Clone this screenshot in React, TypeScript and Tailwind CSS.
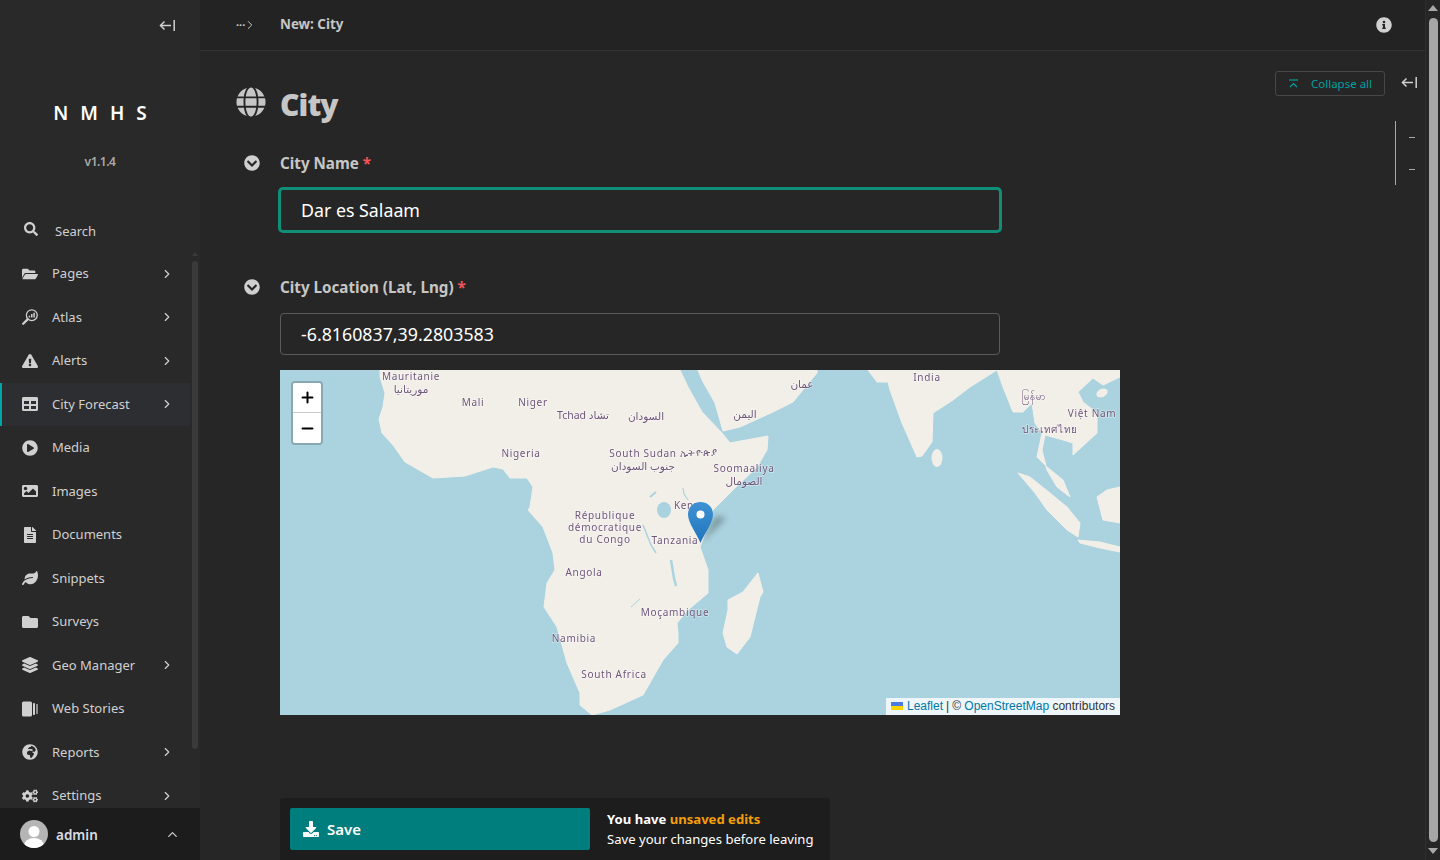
import { ChevronRight, ChevronUp, Minus, Plus } from 'lucide-react';
import {
  FaChevronCircleDown,
  FaCogs,
  FaDownload,
  FaExclamationTriangle,
  FaFileAlt,
  FaFolder,
  FaFolderOpen,
  FaGlobe,
  FaGlobeAfrica,
  FaImage,
  FaInfoCircle,
  FaLayerGroup,
  FaLeaf,
  FaPlayCircle,
  FaSearch,
  FaTable,
} from 'react-icons/fa';
import type { ComponentType, ReactNode } from 'react';

function StoriesIcon({ size = 16 }: { size?: number }) {
  return (
    <svg width={size} height={size} viewBox="0 0 16 16" fill="currentColor">
      <rect x="0" y="0.5" width="10" height="15" rx="1.5" />
      <rect x="11" y="2" width="2" height="12" rx="0.8" />
      <rect x="14.4" y="3" width="1.2" height="10" rx="0.6" />
    </svg>
  );
}

function AtlasIcon({ size = 16 }: { size?: number }) {
  return (
    <svg width={size} height={size} viewBox="0 0 16 16" fill="none" stroke="currentColor">
      <circle cx="9.800" cy="6.200" r="5.400" strokeWidth="1.300" />
      <path d="M5.600 10.400 L1.200 14.800" strokeWidth="2.200" strokeLinecap="round" />
      <path d="M7.500 6.800 V8.500 M9.800 5 V8.500 M12.100 3.800 V8.500" strokeWidth="1.500" />
    </svg>
  );
}

function CollapseArrow({ size = 17 }: { size?: number }) {
  return (
    <svg width={size} height={size} viewBox="0 0 17 17" fill="none" stroke="currentColor" strokeWidth="1.500">
      <path d="M1.500 8.500 H12" />
      <path d="M5.500 4.500 L1.500 8.500 L5.500 12.500" />
      <path d="M15.200 3 V14" />
    </svg>
  );
}

type NavItem = { label: string; icon: ComponentType<{ size?: number }>; arrow?: boolean; active?: boolean };

const NAV: NavItem[] = [
  { label: 'Pages', icon: FaFolderOpen, arrow: true },
  { label: 'Atlas', icon: AtlasIcon, arrow: true },
  { label: 'Alerts', icon: FaExclamationTriangle, arrow: true },
  { label: 'City Forecast', icon: FaTable, arrow: true, active: true },
  { label: 'Media', icon: FaPlayCircle },
  { label: 'Images', icon: FaImage },
  { label: 'Documents', icon: FaFileAlt },
  { label: 'Snippets', icon: FaLeaf },
  { label: 'Surveys', icon: FaFolder },
  { label: 'Geo Manager', icon: FaLayerGroup, arrow: true },
  { label: 'Web Stories', icon: StoriesIcon },
  { label: 'Reports', icon: FaGlobeAfrica, arrow: true },
  { label: 'Settings', icon: FaCogs, arrow: true },
];

function Sidebar() {
  return (
    <aside className="relative flex h-full w-[200px] shrink-0 flex-col bg-[#292929] text-[#d0d0d0]">
      <div className="flex h-[50px] shrink-0 items-center justify-end pr-[24px]">
        <CollapseArrow />
      </div>
      <div className="mt-[50px] h-[26px] shrink-0 pl-[12px] text-center text-[19px] font-semibold leading-[26px] tracking-[12px] text-white">
        NMHS
      </div>
      <div className="mt-[26px] h-[20px] shrink-0 text-center text-[12px] font-semibold leading-[20px] tracking-[-0.04em] text-[#a9a9a9]">
        v1.1.4
      </div>
      <div className="mt-[40px] flex h-[40px] shrink-0 items-center pl-[24px]">
        <FaSearch size={14} className="-mt-[6px]" />
        <span className="ml-[17px] text-[13px]">Search</span>
      </div>
      <nav className="min-h-0 flex-1 overflow-hidden">
        {NAV.map(item => (
          <div
            key={item.label}
            className={`flex h-[43.5px] w-[190px] items-center pr-[16px] text-[13px] ${
              item.active ? 'border-l-2 border-[#00a5a5] bg-[#2d2e32] pl-[20px]' : 'pl-[22px]'
            }`}
          >
            <span className="flex w-[16px] justify-center">
              <item.icon size={16} />
            </span>
            <span className="ml-[14px] flex-1">{item.label}</span>
            {item.arrow && <ChevronRight size={14} strokeWidth={2} />}
          </div>
        ))}
      </nav>
      {/* sidebar scrollbar */}
      <div className="absolute left-[192px] top-[252px] h-[556px] w-[6px]">
        <div className="mx-auto h-0 w-0 border-x-[3px] border-b-[4px] border-x-transparent border-b-[#3a3a3a]" />
        <div className="mt-[5px] h-[488px] rounded-[3px] bg-[#3a3a3a]" />
      </div>
      <div className="z-10 flex h-[52px] shrink-0 items-center bg-[#1c1c1c] pl-[20px] pr-[20px]">
        <svg width="28" height="28" viewBox="0 0 28 28">
          <clipPath id="avatar">
            <circle cx="14" cy="14" r="14" />
          </clipPath>
          <g clipPath="url(#avatar)">
            <rect width="28" height="28" fill="#b5b5b5" />
            <circle cx="14" cy="11.5" r="5.5" fill="#fff" />
            <ellipse cx="14" cy="26" rx="10" ry="8" fill="#fff" />
          </g>
        </svg>
        <span className="ml-[8px] mt-[2px] flex-1 text-[13.5px] font-semibold text-[#d8dde6]">admin</span>
        <ChevronUp size={15} strokeWidth={2} />
      </div>
    </aside>
  );
}

function FieldLabel({ children }: { children: ReactNode }) {
  return (
    <div className="flex items-center">
      <span className="flex w-[44px] justify-center pr-[12px] text-[#cfcfcf]">
        <FaChevronCircleDown size={16} />
      </span>
      <span className="text-[15.2px] font-bold text-[#c6c6c6]">
        {children} <span className="text-[#f2545b]">*</span>
      </span>
    </div>
  );
}

type Label = { x: number; y: number; t: string };

const LABELS: Label[] = [
  { x: 131, y: 10, t: 'Mauritanie' },
  { x: 131, y: 23, t: 'موريتانيا' },
  { x: 193, y: 36, t: 'Mali' },
  { x: 253, y: 36, t: 'Niger' },
  { x: 303, y: 49, t: 'Tchad تشاد' },
  { x: 366, y: 50, t: 'السودان' },
  { x: 241, y: 87, t: 'Nigeria' },
  { x: 363, y: 87, t: 'South Sudan' },
  { x: 419, y: 86, t: 'ኢትዮጵያ' },
  { x: 363, y: 100, t: 'جنوب السودان' },
  { x: 325, y: 149, t: 'République' },
  { x: 325, y: 161, t: 'démocratique' },
  { x: 325, y: 173, t: 'du Congo' },
  { x: 410, y: 139, t: 'Kenya' },
  { x: 395, y: 174, t: 'Tanzania' },
  { x: 304, y: 206, t: 'Angola' },
  { x: 395, y: 246, t: 'Moçambique' },
  { x: 294, y: 272, t: 'Namibia' },
  { x: 334, y: 308, t: 'South Africa' },
  { x: 464, y: 102, t: 'Soomaaliya' },
  { x: 464, y: 115, t: 'الصومال' },
  { x: 465, y: 48, t: 'اليمن' },
  { x: 522, y: 18, t: 'عمان' },
  { x: 647, y: 11, t: 'India' },
  { x: 754, y: 30, t: 'မြန်မာ' },
  { x: 812, y: 47, t: 'Việt Nam' },
  { x: 770, y: 63, t: 'ประเทศไทย' },
];

const LAND = [
  '100,0 100,7 105,23 103,37 99,49 102,63 113,75 125,92 153,108 185,106 213,97 223,99 230,108 247,108 253,117 250,137 248,140 263,157 273,183 275,200 267,213 264,237 277,257 287,293 300,323 300,335 312,345 330,340 363,325 383,290 398,273 398,263 397,253 408,240 428,223 428,200 420,177 422,172 433,140 453,120 477,97 487,80 488,66 450,73 442,63 422,42 408,17 400,0',
  '418,0 422,10 435,33 443,61 460,57 493,42 513,32 537,3 537,0',
  '588,0 597,12 608,12 610,20 622,53 637,87 642,86 652,72 653,43 673,30 690,17 717,0',
  '717,0 723,17 733,42 743,42 752,33 755,53 762,63 757,87 767,97 783,110 790,127 777,117 767,100 762,80 765,65 783,70 793,73 793,85 817,63 817,43 803,32 798,22 813,8 823,15 840,7 840,0',
  '738,103 750,107 770,123 787,137 800,153 798,167 787,160 767,140 755,123',
  '798,170 820,172 840,177 840,182 820,178 800,173',
  '840,117 827,120 817,127 823,150 840,153',
  '478,203 483,222 480,227 475,247 470,267 457,284 447,277 443,263 448,240 448,230 463,222 470,213',
];

function WorldMap() {
  return (
    <div className="relative mt-[15px] h-[345px] w-[840px] overflow-hidden bg-[#aad3df]">
      <svg viewBox="0 0 840 345" className="block h-full w-full blur-[0.4px]">
        {LAND.map(points => (
          <polygon key={points} points={points} fill="#f2efe9" stroke="#f2efe9" strokeWidth="1" strokeLinejoin="round" />
        ))}
        <ellipse cx="657" cy="88" rx="5.500" ry="9" fill="#f2efe9" />
        <ellipse cx="822" cy="23" rx="6" ry="4" fill="#f2efe9" transform="rotate(-25 822 23)" />
        {/* lakes */}
        <ellipse cx="384" cy="140" rx="7" ry="8" fill="#aad3df" />
        <path d="M363 155 L371 175 L376 183" stroke="#aad3df" strokeWidth="1.500" fill="none" />
        <path d="M391 190 L394 208 L396 216" stroke="#aad3df" strokeWidth="2.500" fill="none" />
        <path d="M403 118 L404 124 L408 130" stroke="#aad3df" strokeWidth="1.200" fill="none" />
        <path d="M351 237 L360 229" stroke="#aad3df" strokeWidth="1" fill="none" />
        <path d="M370 127 L376 122" stroke="#aad3df" strokeWidth="2" fill="none" />
        {LABELS.map(l => {
          const arabic = /[\u0600-\u06FF]/.test(l.t);
          return (
            <text
              key={l.t + l.x}
              x={l.x}
              y={l.y}
              textAnchor="middle"
              fontSize={arabic ? 10.5 : 10}
              letterSpacing={arabic ? 0 : 0.7}
              fill="#6d5578"
              stroke="#ffffff"
              strokeOpacity="0.45"
              strokeWidth="1.400"
              paintOrder="stroke"
              fontFamily="'Noto Sans', 'DejaVu Sans', sans-serif"
            >
              {l.t}
            </text>
          );
        })}
        <defs>
          <linearGradient id="pin" x1="0" y1="0" x2="0" y2="1">
            <stop offset="0" stopColor="#3f92d2" />
            <stop offset="1" stopColor="#1f75bd" />
          </linearGradient>
          <filter id="pinShadow" x="-50%" y="-50%" width="200%" height="200%">
            <feGaussianBlur stdDeviation="3" />
          </filter>
        </defs>
        <path d="M421 173 L446 148 L436 146 L428 160 Z" fill="#000" opacity="0.3" filter="url(#pinShadow)" />
        <path
          d="M420.500 173 C417 164 408 153 408 144.500 C408 137 413.500 132 420.500 132 C427.500 132 433 137 433 144.500 C433 153 424 164 420.500 173 Z"
          fill="url(#pin)"
        />
        <circle cx="420.500" cy="144.500" r="4" fill="#fff" />
      </svg>
      <div className="absolute left-[11px] top-[11px] w-[32px] rounded-[4px] border-2 border-black/20 bg-clip-padding">
        <div className="flex h-[30px] items-center justify-center rounded-t-[2px] border-b border-[#ccc] bg-white text-black">
          <Plus size={17} strokeWidth={2.8} />
        </div>
        <div className="flex h-[30px] items-center justify-center rounded-b-[2px] bg-white text-black">
          <Minus size={17} strokeWidth={2.8} />
        </div>
      </div>
      <div className="absolute bottom-0 right-0 flex h-[17px] w-[234px] items-center whitespace-nowrap bg-white/80 pb-[2px] pl-[5px] font-['Liberation_Sans',sans-serif] text-[12px] text-[#333]">
        <svg width="12" height="8" viewBox="0 0 12 8" className="mr-[4px]">
          <rect width="12" height="4" fill="#4C7BE1" />
          <rect y="4" width="12" height="4" fill="#FFD500" />
        </svg>
        <span className="text-[#0078a8]">Leaflet</span>
        <span className="mx-[3px]">|</span>
        <span>©&nbsp;</span>
        <span className="text-[#0078a8]">OpenStreetMap</span>
        <span>&nbsp;contributors</span>
      </div>
    </div>
  );
}

function SaveBar() {
  return (
    <div className="mt-auto ml-[80px] flex h-[62px] w-[550px] shrink-0 items-start rounded-t-[3px] bg-[#1d1d1d] pl-[10px] pt-[10px]">
      <button className="flex h-[42px] w-[300px] items-center rounded-[2px] bg-[#007d7d] pl-[13px] text-[15px] font-semibold text-white">
        <FaDownload size={16} />
        <span className="ml-[8px] mt-[1px]">Save</span>
      </button>
      <div className="ml-[17px] mt-[1px] text-[13.1px] leading-[20px] text-white">
        <div className="font-bold">
          You have <span className="text-[#f59e0b]">unsaved edits</span>
        </div>
        <div>Save your changes before leaving</div>
      </div>
    </div>
  );
}

function Outline() {
  return (
    <aside className="flex-1 pt-[20px]">
      <div className="flex items-center">
        <div className="flex h-[25px] w-[110px] items-center rounded-[3px] border border-[#474747] pl-[12px] text-[11.5px] text-[#00a0a0]">
          <svg width="11" height="10" viewBox="0 0 11 10" fill="none" stroke="currentColor" strokeWidth="1.2">
            <path d="M1 1 H10" />
            <path d="M2 8 L5.500 4.500 L9 8" />
          </svg>
          <span className="ml-[12px]">Collapse all</span>
        </div>
        <span className="ml-[16px] -mt-[2px] text-[#d0d0d0]">
          <CollapseArrow />
        </span>
      </div>
      <div className="ml-[120px] mt-[25px] flex h-[64px] w-[22px] flex-col justify-around border-l border-[#a8a8a8] pl-[13px]">
        <div className="h-px w-[6px] bg-[#a8a8a8]" />
        <div className="h-px w-[6px] bg-[#a8a8a8]" />
      </div>
    </aside>
  );
}

export default function App() {
  return (
    <div className="flex h-screen w-full overflow-hidden bg-[#262626] font-['Noto_Sans',sans-serif]">
      <Sidebar />
      <main className="flex h-full min-w-0 flex-1 flex-col">
        <header className="flex h-[51px] shrink-0 items-center border-b border-[#333] bg-[#232323] pb-[1px] pl-[36px] pr-[33px]">
          <span className="flex w-[44px] items-center text-[#cfcfcf]">
            <span className="text-[11px] font-bold leading-none">···</span>
            <ChevronRight size={14} strokeWidth={1.6} className="-ml-[2px]" />
          </span>
          <span className="flex-1 text-[13.4px] font-bold text-[#c6c6c6]">New: City</span>
          <FaInfoCircle size={16} className="text-[#d0d0d0]" />
        </header>
        <div className="flex min-h-0 flex-1">
          <div className="flex w-[1075px] shrink-0 flex-col">
            <div className="ml-[36px] mt-[36px] flex h-[36px] items-center">
              <FaGlobe size={30} className="-mt-[6px] text-[#c6c6c6]" />
              <h1 className="ml-[14px] text-[30px] font-black leading-[36px] tracking-[-0.03em] text-[#c6c6c6]">City</h1>
            </div>
            <div className="mt-[28px] h-[24px] pl-[36px] leading-[24px]">
              <FieldLabel>City Name</FieldLabel>
            </div>
            <div className="ml-[78px] mt-[12px] flex h-[46px] w-[724px] items-center rounded-[5px] border-[3px] border-[#0f8f78] pl-[20px] text-[17.8px] text-white">
              Dar es Salaam
            </div>
            <div className="mt-[42px] h-[24px] pl-[36px] leading-[24px]">
              <FieldLabel>City Location (Lat, Lng)</FieldLabel>
            </div>
            <div className="ml-[80px] mt-[14px] flex h-[42px] w-[720px] items-center rounded-[4px] border border-[#5a5a5a] pl-[20px] text-[17.8px] text-white">
              -6.8160837,39.2803583
            </div>
            <div className="ml-[80px]">
              <WorldMap />
            </div>
            <SaveBar />
          </div>
          <Outline />
        </div>
      </main>
      {/* page scrollbar */}
      <div className="flex h-full w-[15px] shrink-0 flex-col items-center border-l border-[#2e2e2e] bg-[#262626] pt-[5px]">
        <div className="h-0 w-0 border-x-[5px] border-b-[6px] border-x-transparent border-b-[#a8a8a8]" />
        <div className="mt-[7px] h-[824px] w-[9px] rounded-[5px] bg-[#a6a6a6]" />
        <div className="mt-[6px] h-0 w-0 border-x-[5px] border-t-[6px] border-x-transparent border-t-[#a8a8a8]" />
      </div>
    </div>
  );
}
